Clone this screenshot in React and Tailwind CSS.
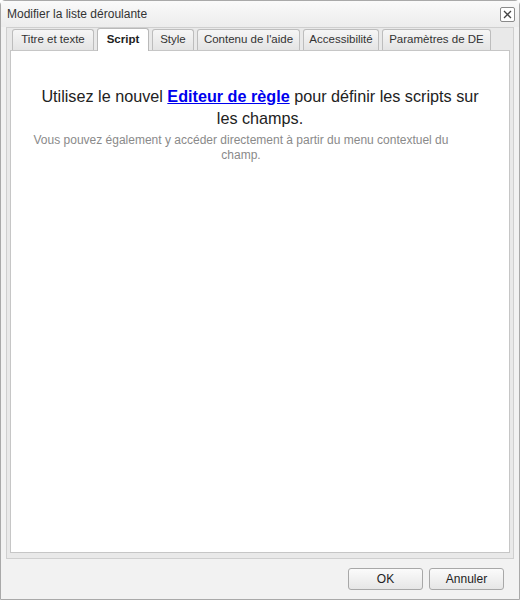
import React from 'react';

const tabs = [
  { label: 'Titre et texte', w: 'w-[82px]' },
  { label: 'Script', w: 'w-[52px]' },
  { label: 'Style', w: 'w-[42px]' },
  { label: "Contenu de l'aide", w: 'w-[103px]' },
  { label: 'Accessibilité', w: 'w-[76px]' },
  { label: 'Paramètres de DE', w: 'w-[109px]' },
];

function App() {
  return (
    <div className="w-[520px] h-[600px] bg-white font-['Liberation_Sans',Arial,sans-serif]">
      <div className="h-full flex flex-col border border-[#a9a9a9] rounded-t-[5px] bg-[#f2f2f2]">
        {/* title bar */}
        <div className="h-[26px] flex items-center justify-between pl-[6px] pr-[4px] bg-gradient-to-b from-[#fafafa] to-[#ececec]">
          <span className="text-[12px] text-[#333]">Modifier la liste déroulante</span>
          <button className="w-[15px] h-[15px] flex items-center justify-center border border-[#8a8a8a] rounded-[2px] bg-white">
            <svg width="9" height="9" viewBox="0 0 9 9">
              <path d="M1 1 L8 8 M8 1 L1 8" stroke="#444" strokeWidth="1.3" />
            </svg>
          </button>
        </div>

        {/* tabbed panel */}
        <div className="flex-1 mx-[5px] flex flex-col border border-[#cfcfcf] bg-[#e9e9e9] px-[3px] pb-[5px]">
          <div className="flex gap-[3px] pl-[2px] h-[22px] items-end">
            {tabs.map((t) =>
              t.label === 'Script' ? (
                <div
                  key={t.label}
                  className={`${t.w} shrink-0 whitespace-nowrap h-[23px] flex items-center justify-center border border-b-0 border-[#b9b9b9] rounded-t-[3px] bg-white text-[11.5px] font-bold text-[#222] -mb-px relative`}
                >
                  {t.label}
                </div>
              ) : (
                <div
                  key={t.label}
                  className={`${t.w} shrink-0 whitespace-nowrap h-[21px] flex items-center justify-center border border-b-0 border-[#bdbdbd] rounded-t-[3px] bg-gradient-to-b from-[#f6f6f6] to-[#e4e4e4] text-[11.5px] text-[#333]`}
                >
                  {t.label}
                </div>
              )
            )}
          </div>
          <div className="flex-1 bg-white border border-[#c6c6c6]">
            <div className="pt-[34px] text-center">
              <p className="px-[20px] text-[16.2px] leading-[22px] text-[#222]">
                Utilisez le nouvel{' '}
                <a href="#" className="font-bold text-[#0000ee] underline">Editeur de règle</a>
                {' '}pour définir les scripts sur les champs.
              </p>
              <p className="mt-[4px] ml-[18px] mr-[56px] text-[12px] leading-[15px] text-[#8a8a8a]">
                Vous pouvez également y accéder directement à partir du menu contextuel du champ.
              </p>
            </div>
          </div>
        </div>

        {/* footer */}
        <div className="h-[40px] flex items-center justify-end gap-[6px] pr-[15px]">
          <button className="w-[75px] h-[22px] border border-[#a8a8a8] rounded-[3px] bg-gradient-to-b from-[#fbfbfb] to-[#e6e6e6] text-[12px] text-[#222]">OK</button>
          <button className="w-[75px] h-[22px] border border-[#a8a8a8] rounded-[3px] bg-gradient-to-b from-[#fbfbfb] to-[#e6e6e6] text-[12px] text-[#222]">Annuler</button>
        </div>
      </div>
    </div>
  );
}

export default App;
